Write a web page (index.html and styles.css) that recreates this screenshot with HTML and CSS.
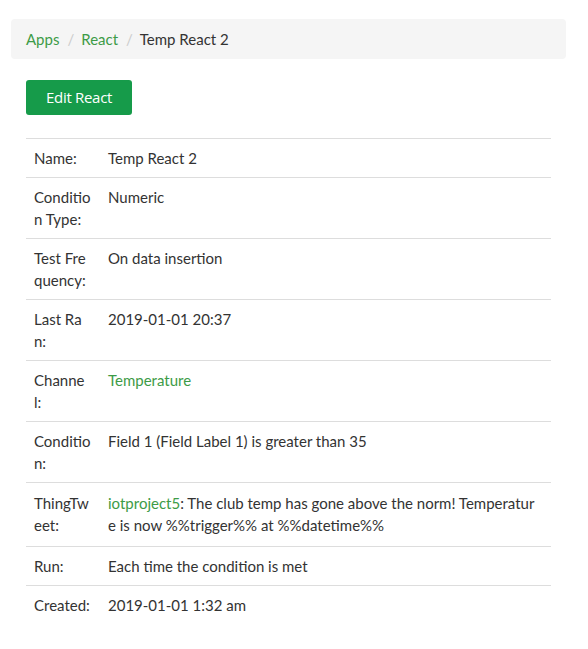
FILE: index.html
```html
<!DOCTYPE html>
<html>
<head>
<meta charset="utf-8">
<link rel="stylesheet" href="styles.css">
</head>
<body>
<div class="page">
  <ol class="crumbs">
    <li><a href="#">Apps</a></li>
    <li class="sep">/</li>
    <li><a href="#">React</a></li>
    <li class="sep">/</li>
    <li class="current">Temp React 2</li>
  </ol>
  <div class="content">
    <a class="btn" href="#">Edit React</a>
    <table class="details">
      <tr><th>Name:</th><td>Temp React 2</td></tr>
      <tr><th>Condition Type:</th><td>Numeric</td></tr>
      <tr><th>Test Frequency:</th><td>On data insertion</td></tr>
      <tr><th>Last Ran:</th><td>2019-01-01 20:37</td></tr>
      <tr><th>Channel:</th><td><a href="#">Temperature</a></td></tr>
      <tr><th>Condition:</th><td>Field 1 (Field Label 1) is greater than 35</td></tr>
      <tr class="tall"><th>ThingTweet:</th><td><a href="#">iotproject5</a>: The club temp has gone above the norm! Temperature is now %%trigger%% at %%datetime%%</td></tr>
      <tr><th>Run:</th><td>Each time the condition is met</td></tr>
      <tr><th>Created:</th><td>2019-01-01 1:32 am</td></tr>
    </table>
  </div>
</div>
</body>
</html>
```
FILE: styles.css
```css
html, body { margin: 0; padding: 0; background: #fff; }
body {
  font-family: Lato, "Open Sans", sans-serif;
  font-size: 15px;
  color: #333;
}
a { color: #3d9b47; text-decoration: none; }
.page { padding: 19px 22px 0 11px; }
.crumbs {
  list-style: none;
  margin: 0;
  padding: 0 15px;
  height: 40px;
  display: flex;
  align-items: center;
  background: #f5f5f5;
  border-radius: 4px;
  font-size: 15px;
}
.crumbs li { line-height: 22px; }
.crumbs .sep { color: #ccc; padding: 0 7px 0 8px; }
.crumbs .current { color: #333; }
.content { padding: 21px 15px 0 15px; }
.btn {
  display: inline-block;
  background: #169b4a;
  color: #fff;
  border-radius: 3px;
  height: 35px;
  line-height: 35px;
  padding: 0 20px;
  font-size: 15px;
  font-family: "Open Sans", sans-serif;
  letter-spacing: -0.3px;
}
.details {
  margin-top: 23px;
  width: 100%;
  border-collapse: collapse;
  table-layout: fixed;
}
.details th, .details td {
  text-align: left;
  vertical-align: top;
  font-weight: normal;
  padding: 8px;
  line-height: 22px;
  border-top: 1px solid #ddd;
  word-break: break-all;
}
.details th { width: 57px; padding-right: 9px; }
.details td { padding-right: 10px; }
.details .tall th, .details .tall td { padding-top: 9px; padding-bottom: 10px; }
```
